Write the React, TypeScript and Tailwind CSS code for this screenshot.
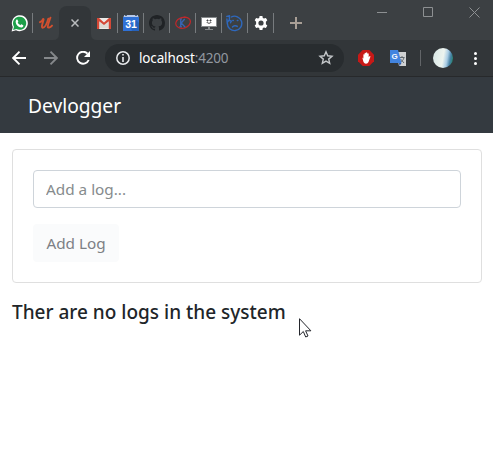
import React from "react";

function WhatsApp() {
  return (
    <svg width="17" height="17" viewBox="0 0 17 17">
      <path d="M.6 16.4 1.8 12A8 8 0 1 1 5 15.2Z" fill="#fff" />
      <path d="M2.1 14.9 3 11.7A6.6 6.6 0 1 1 5.4 14Z" fill="#1d9f49" />
      <path d="M5.3 4.7c.4-.4 1-.4 1.2 0l.8 1.7c.1.4-.5.9-.7 1.2.6 1.2 1.5 2 2.8 2.6.4-.3.8-1 1.1-.9l1.7.9c.5.4-.1 1.6-.8 2-1.700.7-4-.5-5.200-1.800C4.800 8.900 4 6.200 5.300 4.700Z" fill="#fff" />
    </svg>
  );
}

function Udemy() {
  return (
    <svg width="14" height="14" viewBox="0 0 14 14" fill="none" stroke="#d2502f" strokeLinecap="round" strokeLinejoin="round">
      <path d="M1 6.200C2.400 5.700 3.600 4.300 4.200 3 4.700 2.800 4.600 3.600 4.200 4.900 3.200 8.500 2.200 11.500 3.600 11.700 5.700 11.800 8.100 7.200 9.400 2.600" strokeWidth="1.900" />
      <path d="M11.400 1.700C10.300 5 8.400 9.800 8.800 11.200 9.300 12.400 11.700 11 13 9.600" strokeWidth="1.900" />
    </svg>
  );
}

function Gmail() {
  return (
    <svg width="14" height="11" viewBox="0 0 14 11">
      <rect width="14" height="11" rx=".8" fill="#eceae7" />
      <path d="M2 10V2l5 4.500L12 2v8Z" fill="#dedbd5" />
      <path d="M0 0h2l5 4.500L12 0h2v11h-2.200V3.200L7 7.100 2.200 3.200V11H0Z" fill="#d54836" />
    </svg>
  );
}

function Calendar() {
  return (
    <svg width="16" height="16" viewBox="0 0 16 16">
      <path d="M1.300 0h13.400L16 3H0Z" fill="#b8c9e8" />
      <path d="M2 0h2v1H2zm10 0h2v1h-2z" fill="#53657f" />
      <path d="M0 2h16v14H0Z" fill="#2f71d6" />
      <path d="m8 13 5-8 3 3v8H9Z" fill="#2562bd" />
      <text x="8" y="13" textAnchor="middle" fontFamily="Liberation Sans, sans-serif" fontWeight="700" fontSize="10.500" fill="#fff">31</text>
    </svg>
  );
}

function GitHub() {
  return (
    <svg width="16" height="16" viewBox="0 0 16 16" fill="#202326">
      <path d="M8 0C3.580 0 0 3.580 0 8c0 3.540 2.290 6.530 5.470 7.590.4.070.55-.17.55-.38v-1.490c-2.230.48-2.700-.95-2.700-.95-.36-.92-.89-1.170-.89-1.170-.73-.5.060-.49.060-.49.800.060 1.230.83 1.230.83.710 1.220 1.870.87 2.330.66.070-.52.280-.87.510-1.070-1.780-.2-3.640-.89-3.640-3.950 0-.87.310-1.590.82-2.150-.08-.2-.36-1.020.08-2.120 0 0 .67-.21 2.200.82a7.600 7.600 0 0 1 4 0c1.530-1.040 2.200-.82 2.200-.82.440 1.100.16 1.920.08 2.120.510.56.82 1.270.82 2.150 0 3.070-1.870 3.750-3.650 3.950.29.250.54.730.54 1.480v2.200c0 .21.150.46.550.38A8 8 0 0 0 16 8c0-4.420-3.580-8-8-8Z" />
    </svg>
  );
}

function KLogo() {
  return (
    <svg width="16" height="16" viewBox="0 0 16 16" fill="none">
      <path d="M4.300 3.900h2.700M4.300 11.800H7M5.700 4v8M9.700 4 6.200 8l3.800 4M8.600 11.800h2" stroke="#3764b4" strokeWidth="1.300" />
      <path d="M14.200 3.700C10.500.300 2.300 3 .9 7.600-.2 12 5.500 14.700 10.500 12.700 15.500 10.700 17.200 5.200 13 3 11 1.900 8.500 2 6.500 2.700" stroke="#c1272a" strokeWidth="1.200" />
    </svg>
  );
}

function Monitor() {
  return (
    <svg width="16" height="13" viewBox="0 0 16 13">
      <path d="M0 0h16v10H0Z" fill="#85898b" />
      <path d="M1 1h14v8H1Z" fill="#fff" />
      <path d="M7 10h2v2h3v1H4v-1h3Z" fill="#85898b" />
      <path d="M6 3h1v1H6zm3 0h1v1H9zM5.700 5c.7 1.700 3.900 1.700 4.600 0" fill="none" stroke="#343638" strokeWidth=".9" />
    </svg>
  );
}

function ThinkingFace() {
  return (
    <svg width="17" height="17" viewBox="0 0 17 17" fill="none" stroke="#2e68bd" strokeWidth="1.400" strokeLinecap="round">
      <path d="M5.300 2A7.200 7.200 0 1 1 1.400 8M.8 1.500l2.600-.7v4L1.200 7.500.9 4M3.600 5.500l1.700.7-.8 1.600" />
      <path d="M6.800 5.500h.5m4 0h.6M6.500 12c1.200-1.500 3.500-1.700 4.800-.6" />
    </svg>
  );
}

function Gear() {
  return (
    <svg width="14" height="14" viewBox="0 0 14 14">
      <path fillRule="evenodd" fill="#fff" d="M5.600 0h2.800l.4 1.900 1.200.7 1.900-.7L13.300 4.300 11.900 5.700v2.600l1.400 1.300-1.400 2.500-1.900-.7-1.200.7L8.400 14H5.600l-.4-1.900-1.200-.7-1.900.7L.7 9.600l1.400-1.300V5.700L.7 4.300l1.400-2.400 1.900.7 1.200-.7ZM7 4.400a2.600 2.600 0 1 0 0 5.200 2.600 2.600 0 0 0 0-5.200Z" />
    </svg>
  );
}

function PinnedTab({ children, className = "w-[26px]" }: { children: React.ReactNode; className?: string }) {
  return (
    <div className={`flex h-5 items-center justify-center border-r border-[#777b7e] ${className}`}>{children}</div>
  );
}

function TabStrip() {
  return (
    <div className="flex h-10 bg-[#3c4043]">
      <div className="flex pt-[13px]">
        <PinnedTab className="w-[33px] pl-[6px]"><WhatsApp /></PinnedTab>
        <div className="flex h-5 w-[26px] items-center justify-center"><Udemy /></div>
      </div>
      <div className="relative mt-[6px] flex h-[34px] w-8 items-center justify-center rounded-t-lg bg-[#323639]">
        <svg className="absolute bottom-0 -left-[6px]" width="6" height="6"><path d="M6 0v6H0Q6 6 6 0Z" fill="#323639" /></svg>
        <svg className="absolute -right-[6px] bottom-0" width="6" height="6"><path d="M0 0v6h6Q0 6 0 0Z" fill="#323639" /></svg>
        <svg width="8" height="8" viewBox="0 0 8 8" stroke="#b9bcbe" strokeWidth="1.500"><path d="m.5.5 7 7m0-7-7 7" /></svg>
      </div>
      <div className="flex pt-[13px]">
        <PinnedTab className="w-[27px]"><Gmail /></PinnedTab>
        <PinnedTab><Calendar /></PinnedTab>
        <PinnedTab><GitHub /></PinnedTab>
        <PinnedTab><KLogo /></PinnedTab>
        <PinnedTab><Monitor /></PinnedTab>
        <PinnedTab><ThinkingFace /></PinnedTab>
        <PinnedTab><Gear /></PinnedTab>
      </div>
      <svg className="mt-[17px] ml-4" width="12" height="12" stroke="#a99f96" strokeWidth="2"><path d="M6 0v12M0 6h12" /></svg>
      <div className="mt-[7px] ml-auto flex gap-9 pr-[13px]">
        <svg width="10" height="10" stroke="#8d9092"><path d="M0 5.500h10" /></svg>
        <svg width="10" height="10" fill="none" stroke="#8d9092"><path d="M.5.5h9v9h-9Z" /></svg>
        <svg width="11" height="11" fill="none" stroke="#8d9092"><path d="m.5.5 10 10m0-10-10 10" /></svg>
      </div>
    </div>
  );
}

function Translate() {
  return (
    <svg width="16" height="16" viewBox="0 0 16 16">
      <path d="M6 2h10v14H9Z" fill="#cfd1d2" />
      <path d="M9.500 7.500h5m-2.500-1.500v1.500m2 0c-.5 2.500-2 3.700-4 5m.5-3.500 3.500 4" stroke="#626a70" fill="none" />
      <path d="M0 0h8l3.500 13H0Z" fill="#4284df" />
      <path d="M9 13h2.500l-2 3Z" fill="#3159a2" />
      <text x="1.500" y="9.300" fontFamily="Liberation Sans, sans-serif" fontWeight="700" fontSize="8" fill="#f6f8fb">G</text>
    </svg>
  );
}

function Toolbar() {
  return (
    <div className="flex h-[37px] items-center border-b border-[#27292b] bg-[#323639] pl-3">
      <svg width="14" height="14" viewBox="0 0 14 14" fill="none" stroke="#fff" strokeWidth="1.900"><path d="M14 7H1.400M7.500.7 1.200 7l6.300 6.300" /></svg>
      <svg className="ml-[18px]" width="14" height="14" viewBox="0 0 14 14" fill="none" stroke="#85888b" strokeWidth="1.900"><path d="M0 7h12.600M6.500.7 12.800 7l-6.300 6.300" /></svg>
      <svg className="ml-[18px]" width="14" height="14" viewBox="0 0 14 14"><path d="M11.500 2.600A6 6 0 1 0 12.700 9" fill="none" stroke="#fff" strokeWidth="1.900" /><path d="M14 0v6H8Z" fill="#fff" /></svg>
      <div className="ml-[15px] flex h-7 w-[239px] items-center rounded-full bg-[#282c2f] pr-[10px] pl-[11px]">
        <svg width="14" height="14" viewBox="0 0 14 14"><circle cx="7" cy="7" r="6.200" fill="none" stroke="#e8eaed" strokeWidth="1.500" /><path d="M6.200 3h1.600v1.600H6.200Zm0 3h1.600v5H6.200Z" fill="#e8eaed" /></svg>
        <span className="ml-[9px] font-['Noto_Sans',sans-serif] text-[13.5px] leading-5 tracking-[-0.15px] text-[#9298a0]"><span className="text-white">localhost</span>:4200</span>
        <svg className="ml-auto" width="16" height="16" viewBox="0 0 16 16" fill="none" stroke="#c4c7ca" strokeWidth="1.400"><path d="m8 1.800 1.700 4 4.300.4-3.300 2.900 1 4.200L8 11.100l-3.700 2.200 1-4.200L2 6.200l4.300-.4Z" /></svg>
      </div>
      <svg className="ml-[14px]" width="16" height="16" viewBox="0 0 16 16"><path d="M4.700 0h6.600L16 4.700v6.600L11.300 16H4.700L0 11.300V4.700Z" fill="#c71917" /><path d="M4.300 7.500 5.400 8.500V4.500q.6-.7 1.200 0v2.200-3.500q.7-.8 1.300 0v3.500-4q.8-.7 1.400 0v4-3q.8-.7 1.400 0v3.500l1-1.200q1 0 .7.700L10.500 12Q9.800 13.700 8 13.700 6.300 13.700 5.500 12Z" fill="#fff" /></svg>
      <div className="ml-4"><Translate /></div>
      <div className="ml-[14px] h-4 w-px bg-[#626568]" />
      <div className="ml-3 h-5 w-5 rounded-full bg-[linear-gradient(100deg,#d6e5e4_0%,#edf4ef_50%,#a9cce4_68%,#4581a4_82%,#178c52_100%)]" />
      <svg className="ml-5" width="4" height="14" fill="#fff"><circle cx="2.500" cy="2.500" r="1.500" /><circle cx="2.500" cy="7.500" r="1.500" /><circle cx="2.500" cy="12.500" r="1.500" /></svg>
    </div>
  );
}

export default function App() {
  return (
    <div className="relative h-[455px] w-[493px] overflow-hidden bg-white font-['Noto_Sans',sans-serif]">
      <TabStrip />
      <Toolbar />
      <nav className="flex h-14 items-center bg-[#343a40] px-7 pt-px">
        <span className="text-[19.2px] leading-[30px] text-white">Devlogger</span>
      </nav>
      <main className="pt-4 pr-[11px] pl-3">
        <form className="h-[134px] rounded border border-[#dfdfdf] p-5">
          <input placeholder="Add a log..." className="block h-[38px] w-full rounded border border-[#ced4da] px-3 text-[15.3px] placeholder:text-[#868b8d]" />
          <button type="button" className="mt-4 h-[38px] w-[86px] rounded bg-[#fafbfc] text-[15.3px] whitespace-nowrap text-[#7d8085]">Add Log</button>
        </form>
        <h5 className="mt-[17px] text-[19px] leading-6 font-medium whitespace-nowrap text-[#212529]">Ther are no logs in the system</h5>
      </main>
      <svg className="absolute top-[318px] left-[299px]" width="13" height="20" viewBox="0 0 13 20"><path d="M.5.7v16.500l3.800-3.700 2.400 5.500 2.300-1-2.400-5.200h5.300Z" fill="#fff" stroke="#24262c" /></svg>
    </div>
  );
}
